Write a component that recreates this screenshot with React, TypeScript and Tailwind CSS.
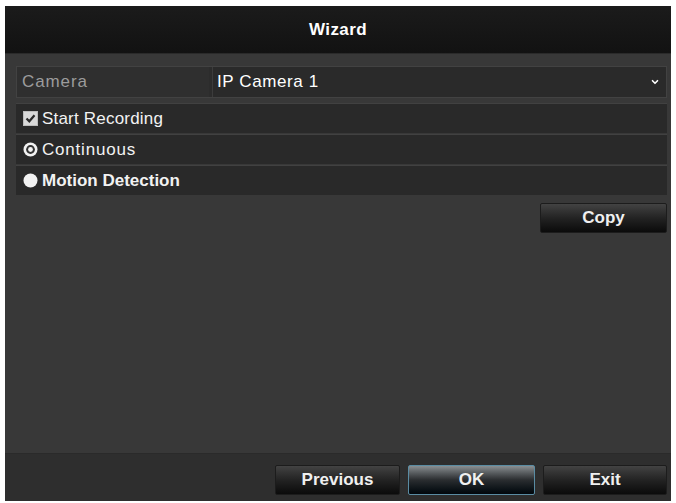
import { ChevronDown } from 'lucide-react';

const font = { fontFamily: '"Liberation Sans", Arial, sans-serif' };

function CheckIcon() {
  return (
    <svg width="15" height="15" viewBox="0 0 15 15" className="shrink-0">
      <rect x="0.5" y="0.5" width="14" height="14" fill="#d9d9d9" stroke="#bdbdbd" />
      <path d="M3.5 7.5 L6.3 10.3 L11.5 4.2" fill="none" stroke="#2a2a2a" strokeWidth="2.2" />
    </svg>
  );
}

function RadioIcon({ checked }: { checked: boolean }) {
  return (
    <svg width="15" height="15" viewBox="0 0 15 15" className="shrink-0">
      <circle cx="7.5" cy="7.5" r="7" fill="#f2f2f2" />
      {checked && (
        <>
          <circle cx="7.5" cy="7.5" r="4.4" fill="#333" />
          <circle cx="7.5" cy="7.5" r="2.4" fill="#f2f2f2" />
        </>
      )}
    </svg>
  );
}

function DarkButton({ label, width, active }: { label: string; width: string; active?: boolean }) {
  return (
    <button
      className={`${width} h-[30px] rounded-[2px] text-[17px] font-bold text-[#f0f0f0] ${
        active
          ? 'border border-[#5a8ca3] bg-linear-to-b from-[#8a8f92] via-[#2a2d30] to-[#02070c]'
          : 'border border-[#1c1c1c] bg-linear-to-b from-[#434343] via-[#232323] to-[#0b0b0b]'
      }`}
    >
      {label}
    </button>
  );
}

export default function App() {
  return (
    <div className="w-[676px] h-[503px] bg-white pl-[5px] pr-[5px] pt-[6px] pb-[2px]" style={font}>
      <div className="flex flex-col h-full bg-[#383838]">
        {/* Header */}
        <header className="h-[48px] shrink-0 bg-linear-to-b from-[#1b1b1b] to-[#121212] border-b border-[#2a2a2a] flex items-center justify-center">
          <h1 className="text-[17px] font-bold text-white tracking-[0.4px]">Wizard</h1>
        </header>

        {/* Body */}
        <main className="flex-1 pl-[11px] pr-[4px] pt-[12px]">
          <div className="flex h-[32px] gap-[3px] border border-[#424242] bg-[#2c2c2c]">
            <div className="w-[192px] flex items-center pl-[5px] bg-[#2f2f2f] text-[17px] text-[#9c9c9c] tracking-[0.9px]">
              Camera
            </div>
            <div className="flex-1 flex items-center justify-between pl-[4px] pr-[6px] bg-[#2a2a2a] border-l border-[#3c3c3c]">
              <span className="text-[17px] text-white tracking-[0.6px]">IP Camera 1</span>
              <ChevronDown className="w-[10px] h-[10px] text-white" strokeWidth={4} />
            </div>
          </div>

          <div className="flex flex-col gap-[1px] mt-[5px]">
            <div className="h-[30px] flex items-center gap-[4px] pl-[7px] bg-[#292929] border-t border-[#414141]">
              <CheckIcon />
              <span className="text-[17px] text-[#f2f2f2] tracking-[0.2px]">Start Recording</span>
            </div>
            <div className="h-[30px] flex items-center gap-[4px] pl-[7px] bg-[#292929] border-t border-[#414141]">
              <RadioIcon checked />
              <span className="text-[17px] text-[#f2f2f2] tracking-[0.8px]">Continuous</span>
            </div>
            <div className="h-[30px] flex items-center gap-[4px] pl-[7px] bg-[#292929] border-t border-[#414141]">
              <RadioIcon checked={false} />
              <span className="text-[17px] font-bold text-[#f2f2f2]">Motion Detection</span>
            </div>
          </div>

          <div className="flex justify-end mt-[8px]">
            <DarkButton label="Copy" width="w-[127px]" />
          </div>
        </main>

        {/* Footer */}
        <footer className="h-[48px] shrink-0 bg-[#2e2e2e] border-t border-[#2a2a2a] flex justify-end gap-[8px] pt-[11px] pr-[4px]">
          <DarkButton label="Previous" width="w-[125px]" />
          <DarkButton label="OK" width="w-[127px]" active />
          <DarkButton label="Exit" width="w-[124px]" />
        </footer>
      </div>
    </div>
  );
}
